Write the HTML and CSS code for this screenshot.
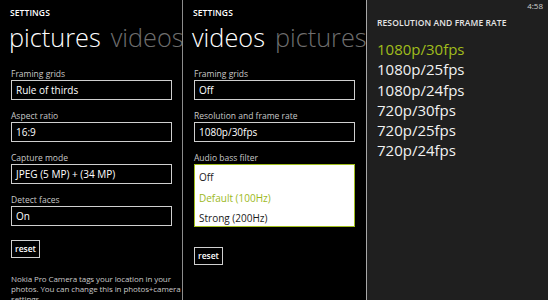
FILE: index.html
```html
<!DOCTYPE html>
<html>
<head>
<meta charset="utf-8">
<link rel="stylesheet" href="styles.css">
</head>
<body>
<div class="screen">
  <section class="panel panel-a">
    <div class="app-title">SETTINGS</div>
    <div class="pivot"><span class="pivot-on">pictures</span><span class="pivot-off">videos</span></div>
    <div class="field">
      <div class="label">Framing grids</div>
      <div class="box">Rule of thirds</div>
    </div>
    <div class="field">
      <div class="label">Aspect ratio</div>
      <div class="box">16:9</div>
    </div>
    <div class="field">
      <div class="label">Capture mode</div>
      <div class="box">JPEG (5 MP) + (34 MP)</div>
    </div>
    <div class="field">
      <div class="label">Detect faces</div>
      <div class="box">On</div>
    </div>
    <div class="btn btn-a">reset</div>
    <p class="note">Nokia Pro Camera tags your location in your photos. You can change this in photos+camera settings.</p>
  </section>
  <section class="panel panel-b">
    <div class="app-title">SETTINGS</div>
    <div class="pivot"><span class="pivot-on">videos</span><span class="pivot-off">pictures</span></div>
    <div class="field">
      <div class="label">Framing grids</div>
      <div class="box">Off</div>
    </div>
    <div class="field">
      <div class="label">Resolution and frame rate</div>
      <div class="box">1080p/30fps</div>
    </div>
    <div class="field">
      <div class="label">Audio bass filter</div>
      <div class="list">
        <div class="opt">Off</div>
        <div class="opt opt-sel">Default (100Hz)</div>
        <div class="opt">Strong (200Hz)</div>
      </div>
    </div>
    <div class="btn btn-b">reset</div>
  </section>
  <section class="panel panel-c">
    <div class="clock">4:58</div>
    <div class="picker-title">RESOLUTION AND FRAME RATE</div>
    <ul class="picker">
      <li class="pick pick-sel">1080p/30fps</li>
      <li class="pick">1080p/25fps</li>
      <li class="pick">1080p/24fps</li>
      <li class="pick">720p/30fps</li>
      <li class="pick">720p/25fps</li>
      <li class="pick">720p/24fps</li>
    </ul>
  </section>
</div>
</body>
</html>
```

FILE: styles.css
```css
html, body {
  margin: 0;
  padding: 0;
  background: #000;
}
body {
  font-family: "Open Sans", "Noto Sans", sans-serif;
  color: #fff;
  width: 548px;
  height: 300px;
  overflow: hidden;
}
.screen {
  display: flex;
  height: 300px;
}
.panel {
  box-sizing: border-box;
  height: 300px;
  overflow: hidden;
  padding-left: 11px;
}
.panel-a {
  width: 183px;
  border-right: 1px solid #8c8c8c;
}
.panel-b {
  width: 184px;
  border-right: 1px solid #a8a8a8;
}
.panel-c {
  flex: 1;
  background: #1f1f1f;
  padding-left: 10px;
  padding-right: 5px;
}
.app-title {
  font-size: 8.5px;
  font-weight: 600;
  line-height: 12px;
  margin-top: 7px;
  margin-left: -1px;
  letter-spacing: 0.1px;
}
.pivot {
  white-space: nowrap;
  font-size: 25.3px;
  font-weight: 300;
  line-height: 30px;
  margin-left: -2px;
  margin-top: 3px;
}
.pivot-off {
  color: #6e6e6e;
  margin-left: 10px;
}
.field {
  width: 161px;
}
.label {
  font-size: 8.5px;
  line-height: 11px;
  color: #c8c8c8;
  margin-top: 10px;
  margin-bottom: 1px;
}
.pivot + .field .label {
  margin-top: 16px;
}
.box {
  box-sizing: border-box;
  height: 20px;
  border: 1px solid #cfcfcf;
  font-size: 10px;
  line-height: 18px;
  padding-left: 4px;
}
.list {
  box-sizing: border-box;
  height: 63px;
  background: #fff;
  border: 1px solid #a0bd1c;
  padding-top: 2px;
}
.opt {
  color: #1a1a1a;
  font-size: 10px;
  line-height: 20.5px;
  padding-left: 4px;
}
.opt-sel {
  color: #9cb91c;
}
.btn {
  display: inline-block;
  box-sizing: border-box;
  border: 1px solid #d0d0d0;
  font-size: 8.5px;
  font-weight: 600;
  line-height: 16px;
  padding: 0 3px;
}
.btn-a {
  margin-top: 14px;
  height: 18px;
}
.btn-b {
  margin-top: 20px;
  height: 18px;
}
.note {
  margin: 16px 0 0;
  width: 172px;
  font-size: 8px;
  line-height: 9.8px;
  letter-spacing: -0.1px;
  color: #c8c8c8;
}
.clock {
  text-align: right;
  font-size: 8px;
  line-height: 12px;
  color: #cfcfcf;
}
.picker-title {
  margin-top: 5px;
  font-size: 8.5px;
  font-weight: 600;
  line-height: 12px;
  color: #e6e6e6;
  letter-spacing: 0.1px;
}
.picker {
  list-style: none;
  margin: 10px 0 0;
  padding: 0;
}
.pick {
  font-size: 15px;
  line-height: 20.3px;
  color: #f2f2f2;
}
.pick-sel {
  color: #a0bd1c;
}
```
